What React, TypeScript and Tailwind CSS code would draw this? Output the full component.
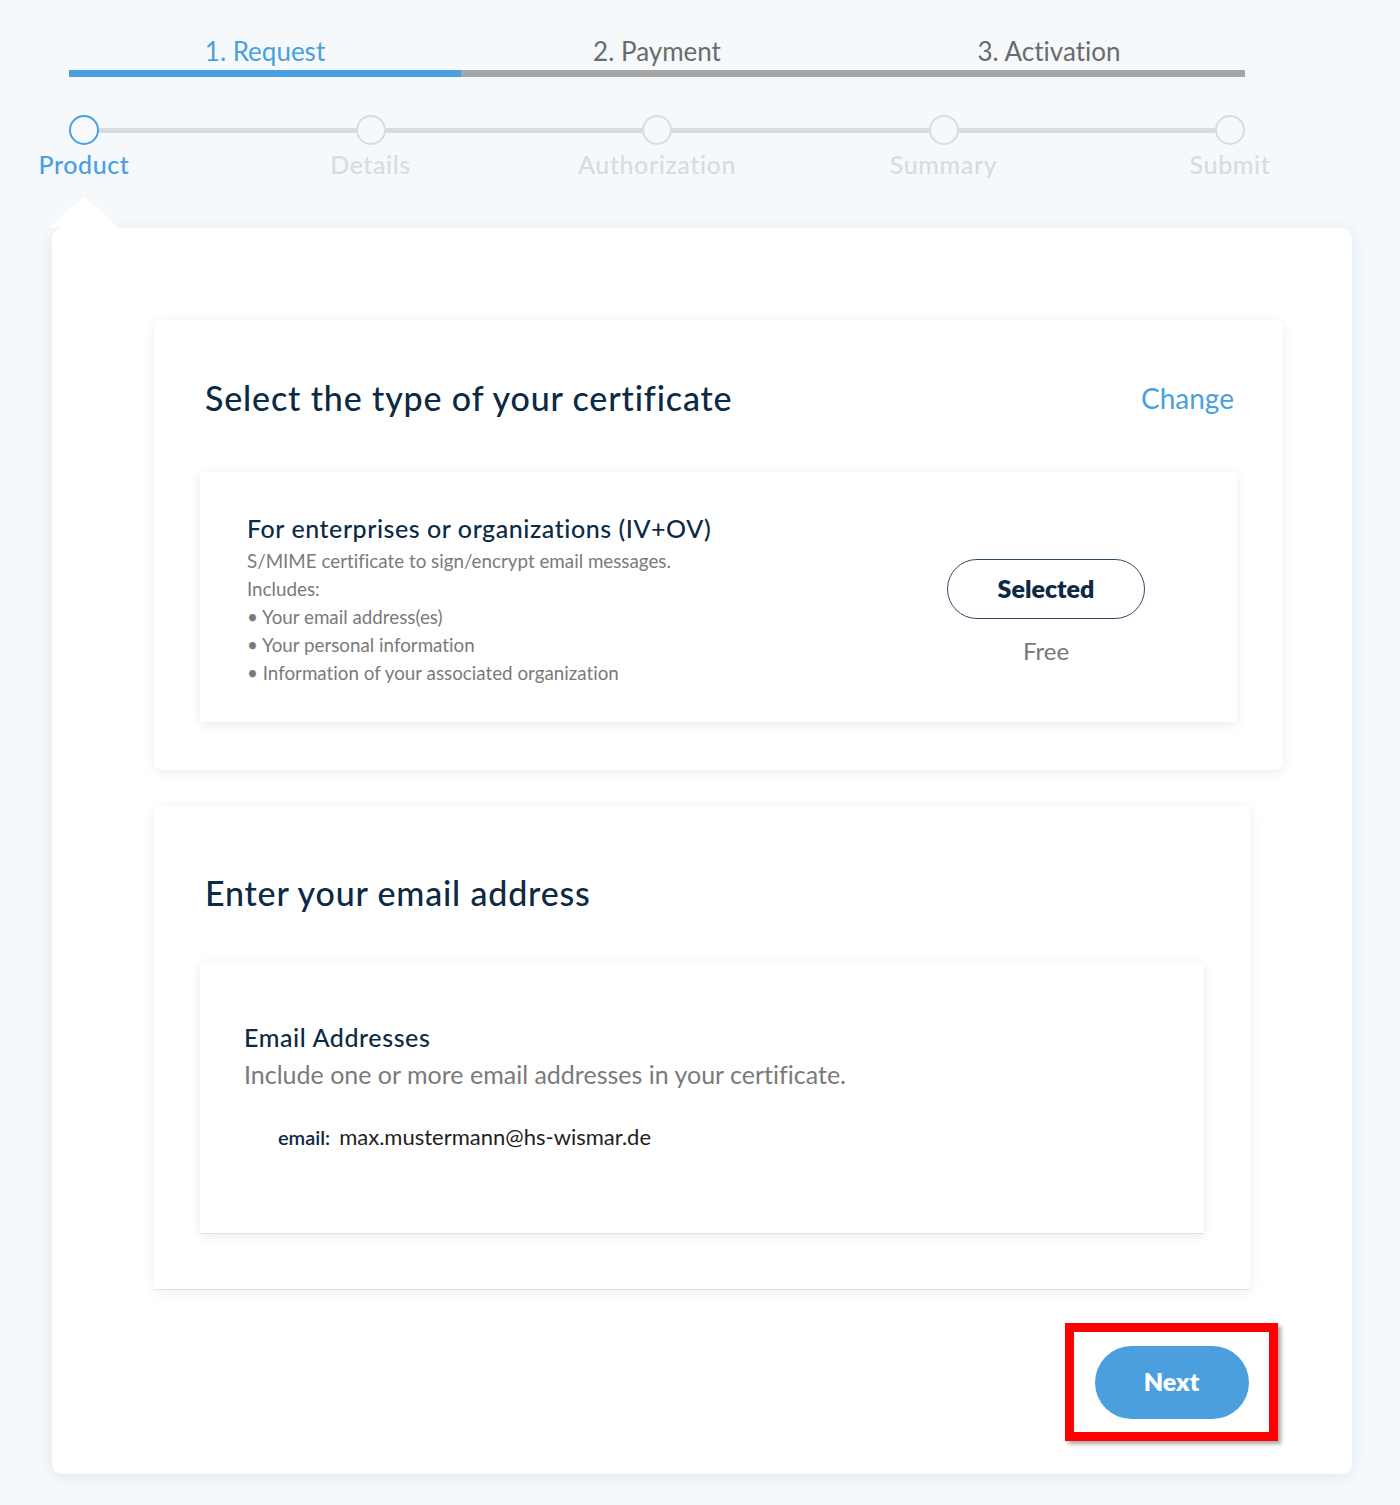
import React from "react";

const navy = "text-[#0c2a44]";

function StepCol({ label, active }: { label: string; active?: boolean }) {
  return (
    <div className="flex flex-col items-center w-[30px] shrink-0">
      <div
        className={
          active
            ? "w-[30px] h-[30px] rounded-full border-[2.5px] border-[#4a9fe0] bg-[#f7fafd]"
            : "w-[30px] h-[30px] rounded-full border-[2.5px] border-[#d6dce1] bg-[#f5f9fc]"
        }
      />
      <div
        className={
          active
            ? "mt-[4px] whitespace-nowrap text-[25px] leading-[30px] tracking-[0.024em] text-[#4a9fe0] font-medium"
            : "mt-[4px] whitespace-nowrap text-[25px] leading-[30px] tracking-[0.024em] text-[#d6dce1] font-medium"
        }
      >
        {label}
      </div>
    </div>
  );
}

function Line() {
  return <div className="flex-1 self-start mt-[13px] h-[5px] bg-[#d6dce1]" />;
}

export default function App() {
  return (
    <div className="min-h-[1505px] bg-[#f5f9fc] font-['Lato','Noto_Sans',sans-serif] overflow-hidden [font-variant-ligatures:none]">
      {/* Phase tabs */}
      <div className="pl-[69px] pt-[35px]">
        <div className="grid grid-cols-3 w-[1176px]">
          <div className="flex flex-col">
            <div className="text-center text-[26px] leading-[32px] text-[#4a9fe0]">1. Request</div>
            <div className="mt-[3px] h-[7px] bg-[#4a9fe0]" />
          </div>
          <div className="flex flex-col">
            <div className="text-center text-[26px] leading-[32px] text-[#6b6b6b]">2. Payment</div>
            <div className="mt-[3px] h-[7px] bg-[#a6a6a6]" />
          </div>
          <div className="flex flex-col">
            <div className="text-center text-[26px] leading-[32px] text-[#6b6b6b]">3. Activation</div>
            <div className="mt-[3px] h-[7px] bg-[#a6a6a6]" />
          </div>
        </div>

        {/* Steps */}
        <div className="mt-[38px] w-[1176px] flex">
          <StepCol label="Product" active />
          <Line />
          <StepCol label="Details" />
          <Line />
          <StepCol label="Authorization" />
          <Line />
          <StepCol label="Summary" />
          <Line />
          <StepCol label="Submit" />
        </div>
      </div>

      {/* Main card */}
      <div className="relative ml-[52px] mt-[49px] w-[1300px] h-[1246px] rounded-[10px] bg-white shadow-[0_2px_14px_rgba(40,70,100,0.10)] pt-[92px] pl-[102px]">
        <div className="absolute left-[-3px] top-[-32px] w-0 h-0 border-l-[35px] border-r-[35px] border-b-[32px] border-l-transparent border-r-transparent border-b-white" />

        {/* Card 1 */}
        <div className="w-[1129px] h-[450px] rounded-[8px] bg-white shadow-[0_2px_12px_rgba(0,0,0,0.08)] px-[46px] pt-[58px]">
          <div className="flex items-center justify-between pl-[5px] pr-[3px]">
            <div className={`text-[34px] leading-[40px] font-medium tracking-[0.025em] ${navy}`}>
              Select the type of your certificate
            </div>
            <div className="text-[28px] leading-[40px] text-[#4a9fe0]">Change</div>
          </div>

          <div className="mt-[54px] h-[250px] bg-white shadow-[0_2px_10px_rgba(0,0,0,0.09)] flex justify-between">
            <div className="pl-[47px] pt-[41px]">
              <div className={`text-[25px] leading-[30px] font-medium tracking-[0.022em] ${navy}`}>
                For enterprises or organizations (IV+OV)
              </div>
              <div className="mt-[4px] text-[18.8px] leading-[28px] text-[#7a7a7a]">
                <div>S/MIME certificate to sign/encrypt email messages.</div>
                <div>Includes:</div>
                <div>• Your email address(es)</div>
                <div>• Your personal information</div>
                <div>• Information of your associated organization</div>
              </div>
            </div>
            <div className="pr-[92px] pt-[87px] flex flex-col items-center">
              <div className={`w-[198px] h-[60px] rounded-full border-[1.5px] border-[#2d4a66] flex items-center justify-center text-[25px] font-extrabold ${navy}`}>
                Selected
              </div>
              <div className="mt-[17px] text-[24px] leading-[30px] text-[#777777]">Free</div>
            </div>
          </div>
        </div>

        {/* Card 2 */}
        <div className="mt-[36px] w-[1096px] h-[484px] bg-white shadow-[0_2px_12px_rgba(0,0,0,0.07)] border-b border-[#dfe3e8] px-[46px] pt-[67px]">
          <div className={`pl-[5px] text-[34px] leading-[40px] font-medium tracking-[0.024em] ${navy}`}>
            Enter your email address
          </div>
          <div className="mt-[50px] h-[271px] bg-white shadow-[0_2px_10px_rgba(0,0,0,0.09)] border-b border-[#dfe3e8] pl-[44px] pt-[59px]">
            <div className={`text-[25px] leading-[30px] font-medium tracking-[0.024em] ${navy}`}>Email Addresses</div>
            <div className="mt-[7px] text-[25px] leading-[30px] text-[#7a7a7a]">
              Include one or more email addresses in your certificate.
            </div>
            <div className="mt-[34px] ml-[34px] flex items-baseline gap-[9px] leading-[28px]">
              <span className={`text-[20px] font-semibold ${navy}`}>email:</span>
              <span className="text-[22px] text-[#1e1e1e]">max.mustermann@hs-wismar.de</span>
            </div>
          </div>
        </div>

        {/* Next */}
        <div className="mt-[33px] flex justify-end pr-[74px]">
          <div className="w-[213px] h-[118px] border-[9px] border-[#ff0000] shadow-[3px_3px_4px_rgba(0,0,0,0.35)] flex items-center justify-center">
            <div className="w-[154px] h-[73px] rounded-full bg-[#4c9fdf] flex items-center justify-center text-[25px] font-extrabold text-white">
              Next
            </div>
          </div>
        </div>
      </div>
    </div>
  );
}
